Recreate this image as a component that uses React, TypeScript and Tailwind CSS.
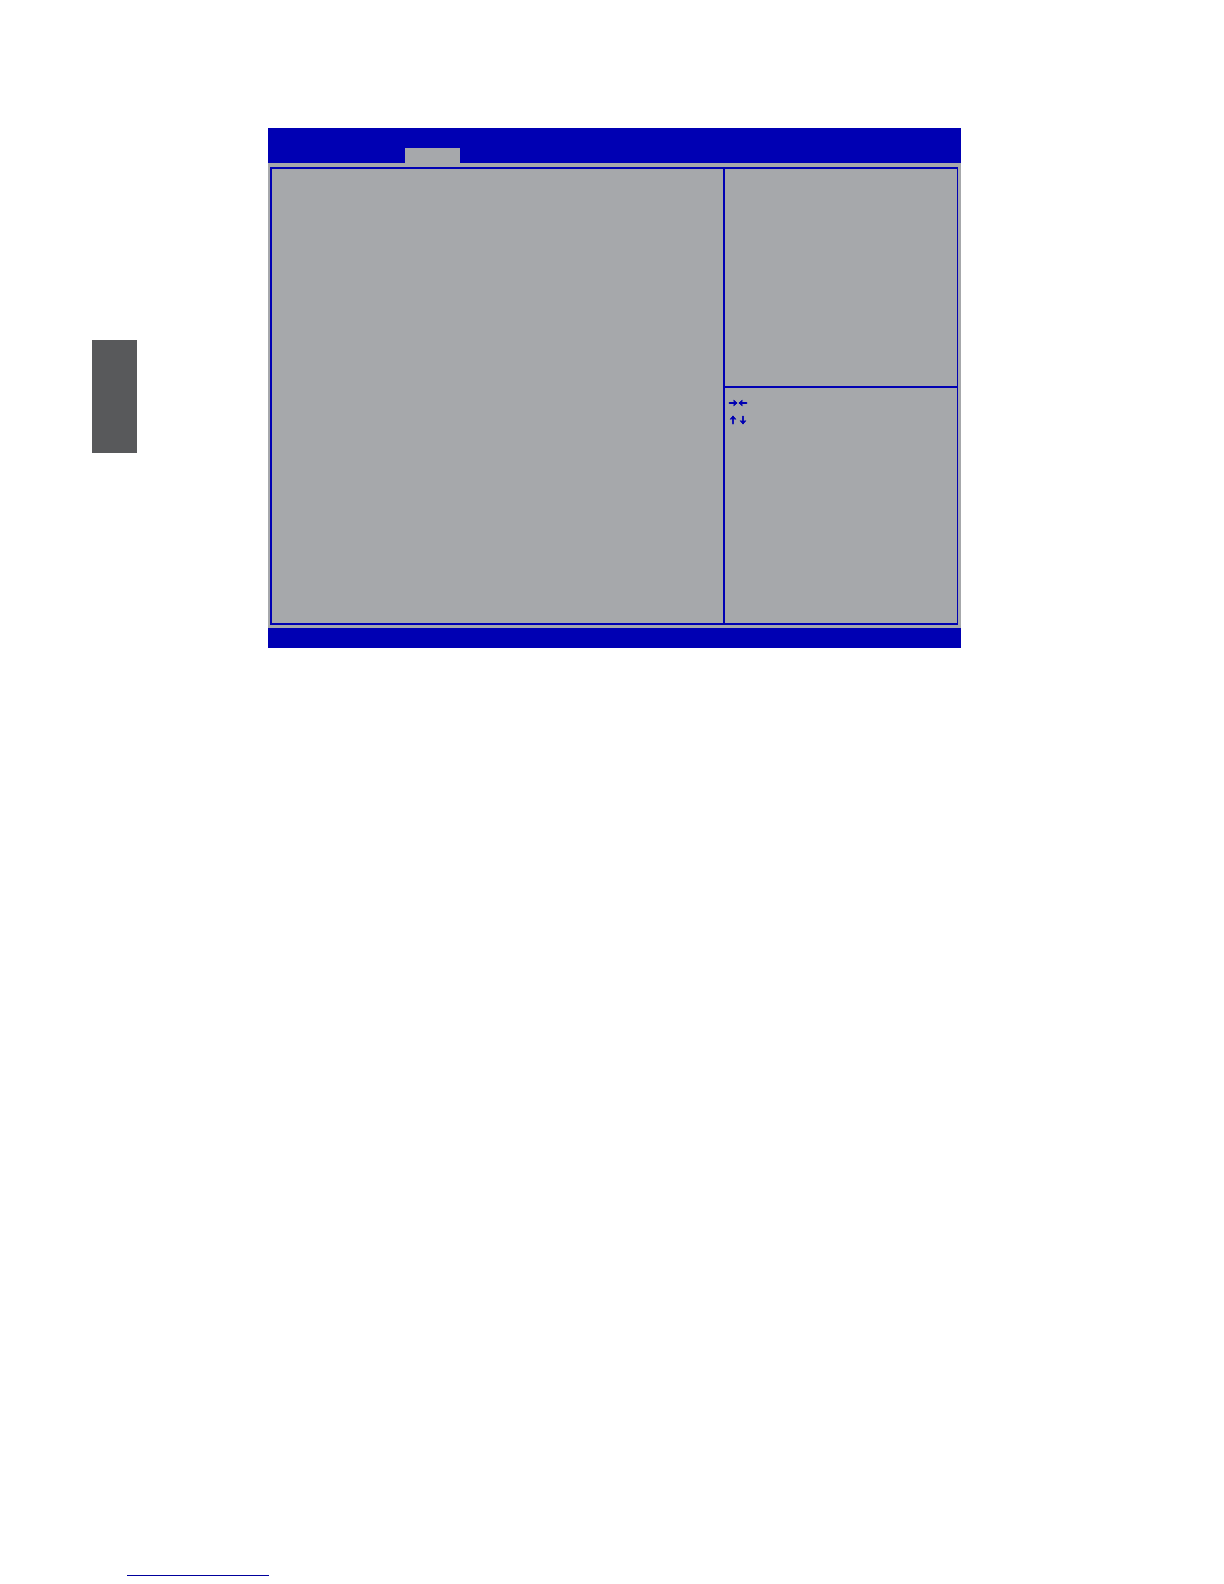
import React from 'react';

interface ArrowProps {
  className: string;
}

const Arrow: React.FC<ArrowProps> = ({ className }) => (
  <svg viewBox="0 0 10 8" className={`h-2 w-[10px] shrink-0 ${className}`} aria-hidden="true">
    <path d="M1.6 4H7.5" fill="none" stroke="currentColor" strokeWidth="1.8" strokeLinecap="round" />
    <path
      d="M5.8 1.3L9.1 4L5.8 6.7L6.5 4Z"
      fill="currentColor"
      stroke="currentColor"
      strokeWidth="1"
      strokeLinejoin="round"
    />
  </svg>
);

const KeyLegend: React.FC = () => (
  <section aria-label="Keys" className="flex-1 pt-[11px] pl-[3px]">
    <div className="flex h-2 items-center">
      <Arrow className="" />
      <Arrow className="rotate-180" />
    </div>
    <div className="mt-2 flex h-[10px] items-center">
      <Arrow className="-rotate-90" />
      <Arrow className="rotate-90" />
    </div>
  </section>
);

const SetupScreen: React.FC = () => (
  <main className="min-w-0 flex-1 bg-[#a6a8ab]">
    <header className="flex h-[35px] items-end bg-[#0000b3] pl-[137px]">
      <button type="button" aria-label="Menu" className="h-[15px] w-[55px] bg-[#a6a8ab]" />
    </header>

    <div className="pt-1 pr-[3px] pb-[3px] pl-[2px]">
      <div className="flex h-[458px] border-2 border-r border-[#0000b3]">
        <section aria-label="Settings" className="flex-1" />
        <aside className="flex w-[234px] flex-col border-l-2 border-[#0000b3]">
          <section aria-label="Help" className="h-[219px] border-b-2 border-[#0000b3]" />
          <KeyLegend />
        </aside>
      </div>
    </div>

    <footer className="h-5 bg-[#0000b3]" />
  </main>
);

export default function App() {
  return (
    <div className="flex min-h-screen flex-col bg-white pt-32 font-['Liberation_Sans',sans-serif] text-[#0000b3]">
      <div className="flex items-start pr-[263px] pl-[92px]">
        <div className="mt-[212px] mr-[131px] h-[113px] w-[45px] shrink-0 bg-[#58595b]" />
        <SetupScreen />
      </div>

      <div className="mt-auto pb-2 pl-[127px]">
        <a href="#top" aria-label="Back to top" className="block h-4 w-[142px] border-b border-[#00009c]" />
      </div>
    </div>
  );
}
